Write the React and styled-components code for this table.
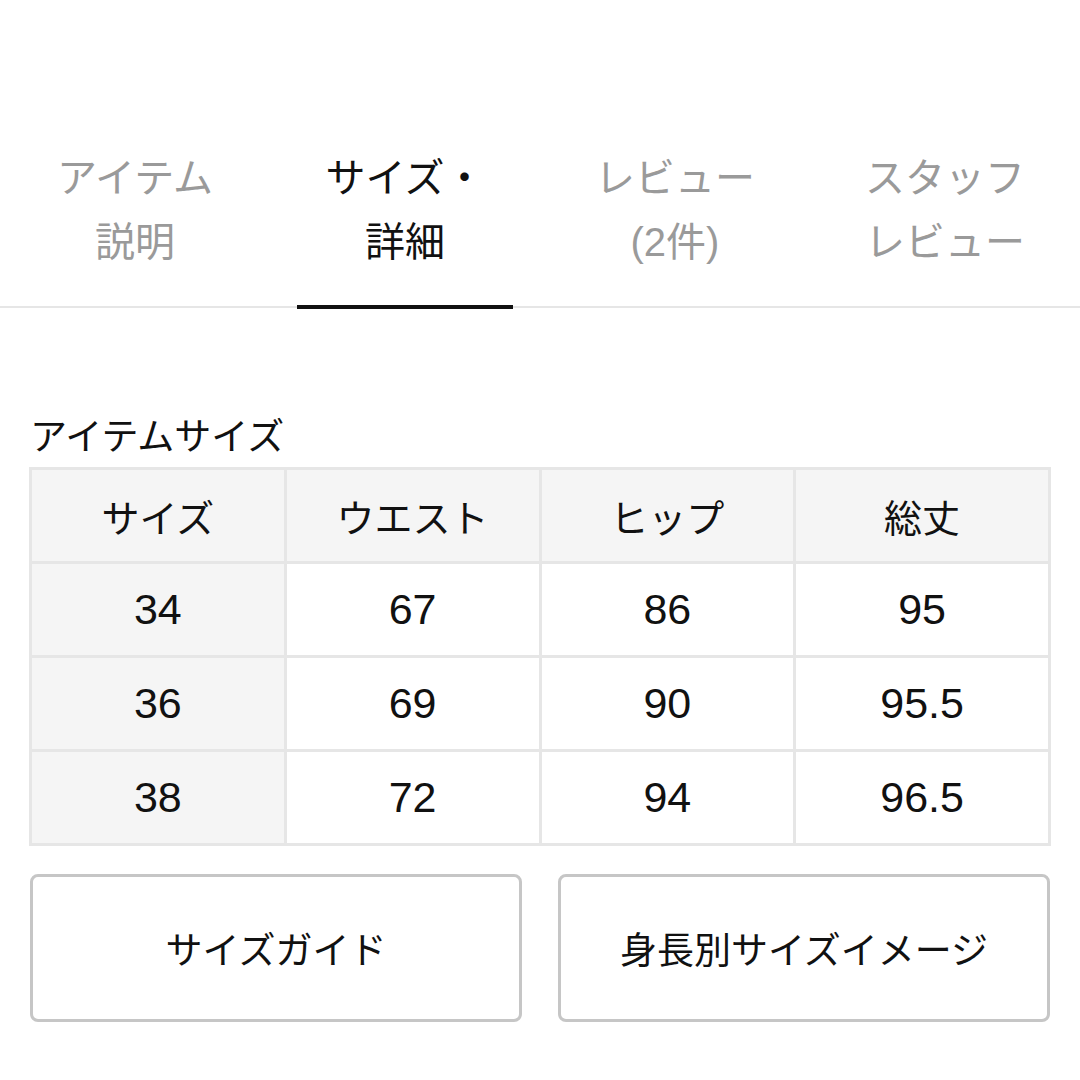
import styled, { createGlobalStyle } from "styled-components";

const GlobalStyle = createGlobalStyle`
    body {
        margin: 0;
        background: #fff;
        font-family: "Liberation Sans", "Noto Sans CJK JP", sans-serif;
        color: #111;
    }
`;

const tabs = [
    { label: ["アイテム", "説明"], active: false },
    { label: ["サイズ・", "詳細"], active: true },
    { label: ["レビュー", "(2件)"], active: false },
    { label: ["スタッフ", "レビュー"], active: false },
];

const header = ["サイズ", "ウエスト", "ヒップ", "総丈"];
const rows = [
    ["34", "67", "86", "95"],
    ["36", "69", "90", "95.5"],
    ["38", "72", "94", "96.5"],
];

export default function App() {
    return (
        <Page>
            <GlobalStyle />
            <TabBar>
                {tabs.map((t, i) => (
                    <Tab key={i} active={t.active}>
                        {t.label[0]}
                        <br />
                        {t.label[1]}
                    </Tab>
                ))}
            </TabBar>
            <Section>
                <SectionTitle>アイテムサイズ</SectionTitle>
                <SizeTable>
                    {header.map((h) => (
                        <Cell key={h} shaded>{h}</Cell>
                    ))}
                    {rows.map((r) =>
                        r.map((v, j) => (
                            <Cell key={r[0] + j} shaded={j === 0} numeric>{v}</Cell>
                        ))
                    )}
                </SizeTable>
                <Buttons>
                    <Button>サイズガイド</Button>
                    <Button>身長別サイズイメージ</Button>
                </Buttons>
            </Section>
        </Page>
    );
}

const Page = styled.div`
    width: 1080px;
    min-height: 1080px;
    background: #fff;
`;

const TabBar = styled.div`
    display: grid;
    grid-template-columns: repeat(4, 1fr);
    padding-top: 146px;
    border-bottom: 2px solid #e6e6e6;
`;

const Tab = styled.div`
    position: relative;
    text-align: center;
    font-size: 40px;
    line-height: 64px;
    padding-bottom: 32px;
    color: ${(p) => (p.active ? "#111" : "#9a9a9a")};

    &::after {
        content: "";
        display: ${(p) => (p.active ? "block" : "none")};
        position: absolute;
        left: 10%;
        right: 10%;
        bottom: -3px;
        height: 4px;
        background: #111;
    }
`;

const Section = styled.div`
    padding: 108px 30px 0;
`;

const SectionTitle = styled.div`
    font-size: 37px;
    line-height: 44px;
    margin-bottom: 7px;
`;

const SizeTable = styled.div`
    display: grid;
    grid-template-columns: repeat(4, 1fr);
    grid-auto-rows: 91px;
    gap: 3px;
    padding: 3px;
    margin: 0 -1px;
    background: #e6e6e6;
`;

const Cell = styled.div`
    display: flex;
    align-items: center;
    justify-content: center;
    font-size: ${(p) => (p.numeric ? "43px" : "38px")};
    background: ${(p) => (p.shaded ? "#f5f5f5" : "#fff")};
`;

const Buttons = styled.div`
    display: grid;
    grid-template-columns: 1fr 1fr;
    gap: 36px;
    margin-top: 28px;
`;

const Button = styled.button`
    height: 148px;
    border: 3px solid #c6c6c6;
    border-radius: 8px;
    background: #fff;
    font-family: "Liberation Sans", "Noto Sans CJK JP", sans-serif;
    font-size: 37px;
    color: #111;
    cursor: pointer;
`;
